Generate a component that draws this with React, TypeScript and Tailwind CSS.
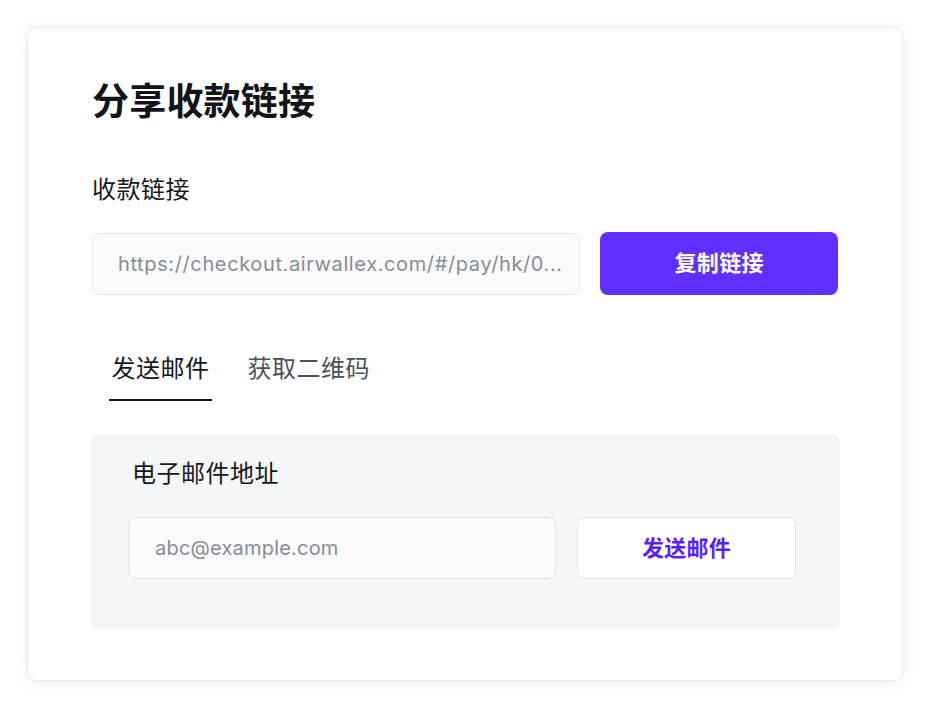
import { useState } from 'react';

const CJK = "font-['Noto_Sans_CJK_SC','Noto_Sans',sans-serif]";
const LATIN = "font-['Inter','Noto_Sans_CJK_SC',sans-serif]";

const LINK = 'https://checkout.airwallex.com/#/pay/hk/0...';

export default function App() {
  const [tab, setTab] = useState<'email' | 'qr'>('email');

  return (
    <div className={`min-h-[706px] w-[928px] bg-white pt-[27px] ${CJK}`}>
      <div className="ml-[27px] w-[876px] rounded-[9px] border border-[#e9e9ee] bg-white px-[64px] pb-[51px] pt-[47px] shadow-[0_2px_18px_rgba(20,20,40,0.07)]">
        <h1 className="text-[37px] font-bold leading-[48px] tracking-[0.2px] text-[#121417]">分享收款链接</h1>

        {/* Link */}
        <div className="mt-[49px] text-[24px] leading-[32px] tracking-[0.5px] text-[#16181c]">收款链接</div>
        <div className="mt-[28px] flex items-center gap-[20px]">
          <div className="flex h-[62px] w-[489px] items-center overflow-hidden rounded-[8px] border border-[#e3e4ea] bg-[#fbfbfc] pl-[25px] pr-[10px]">
            <span className={`whitespace-nowrap text-[20px] tracking-[0.62px] text-[#878c99] ${LATIN}`}>{LINK}</span>
          </div>
          <button className="flex h-[63px] w-[238px] items-center justify-center rounded-[8px] bg-[#612fff] pb-[4px] text-[22px] font-bold tracking-[0.3px] text-white">
            复制链接
          </button>
        </div>

        {/* Tabs */}
        <div className="mt-[56px] flex gap-[33px] pl-[17px]">
          <button
            onClick={() => setTab('email')}
            className={`border-b-2 px-[2.5px] pb-[16px] text-[24px] leading-[32px] tracking-[0.5px] ${tab === 'email' ? 'border-[#16181c] text-[#16181c]' : 'border-transparent text-[#4b505a]'}`}
          >
            发送邮件
          </button>
          <button
            onClick={() => setTab('qr')}
            className={`border-b-2 px-[2.5px] pb-[16px] text-[24px] leading-[32px] tracking-[0.5px] ${tab === 'qr' ? 'border-[#16181c] text-[#16181c]' : 'border-transparent text-[#4b505a]'}`}
          >
            获取二维码
          </button>
        </div>

        {/* Email panel */}
        <div className="mt-[33px] ml-[-1px] mr-[-2px] rounded-[8px] bg-[#f5f6f8] pb-[50px] pl-[37px] pr-[43px] pt-[22px]">
          <div className="ml-[4px] text-[24px] leading-[32px] tracking-[0.5px] text-[#16181c]">电子邮件地址</div>
          <div className="mt-[29px] flex items-center gap-[21px]">
            <input
              placeholder="abc@example.com"
              className={`h-[62px] w-[428px] rounded-[8px] border border-[#e3e4ea] bg-[#fbfbfc] pl-[26px] text-[20px] tracking-[0.2px] text-[#16181c] outline-none placeholder:text-[#878c99] ${LATIN}`}
            />
            <button className="flex h-[62px] w-[219px] items-center justify-center rounded-[8px] border border-[#e3e4ea] bg-white pb-[4px] text-[22px] font-bold tracking-[0.3px] text-[#5b1fff]">
              发送邮件
            </button>
          </div>
        </div>
      </div>
    </div>
  );
}
